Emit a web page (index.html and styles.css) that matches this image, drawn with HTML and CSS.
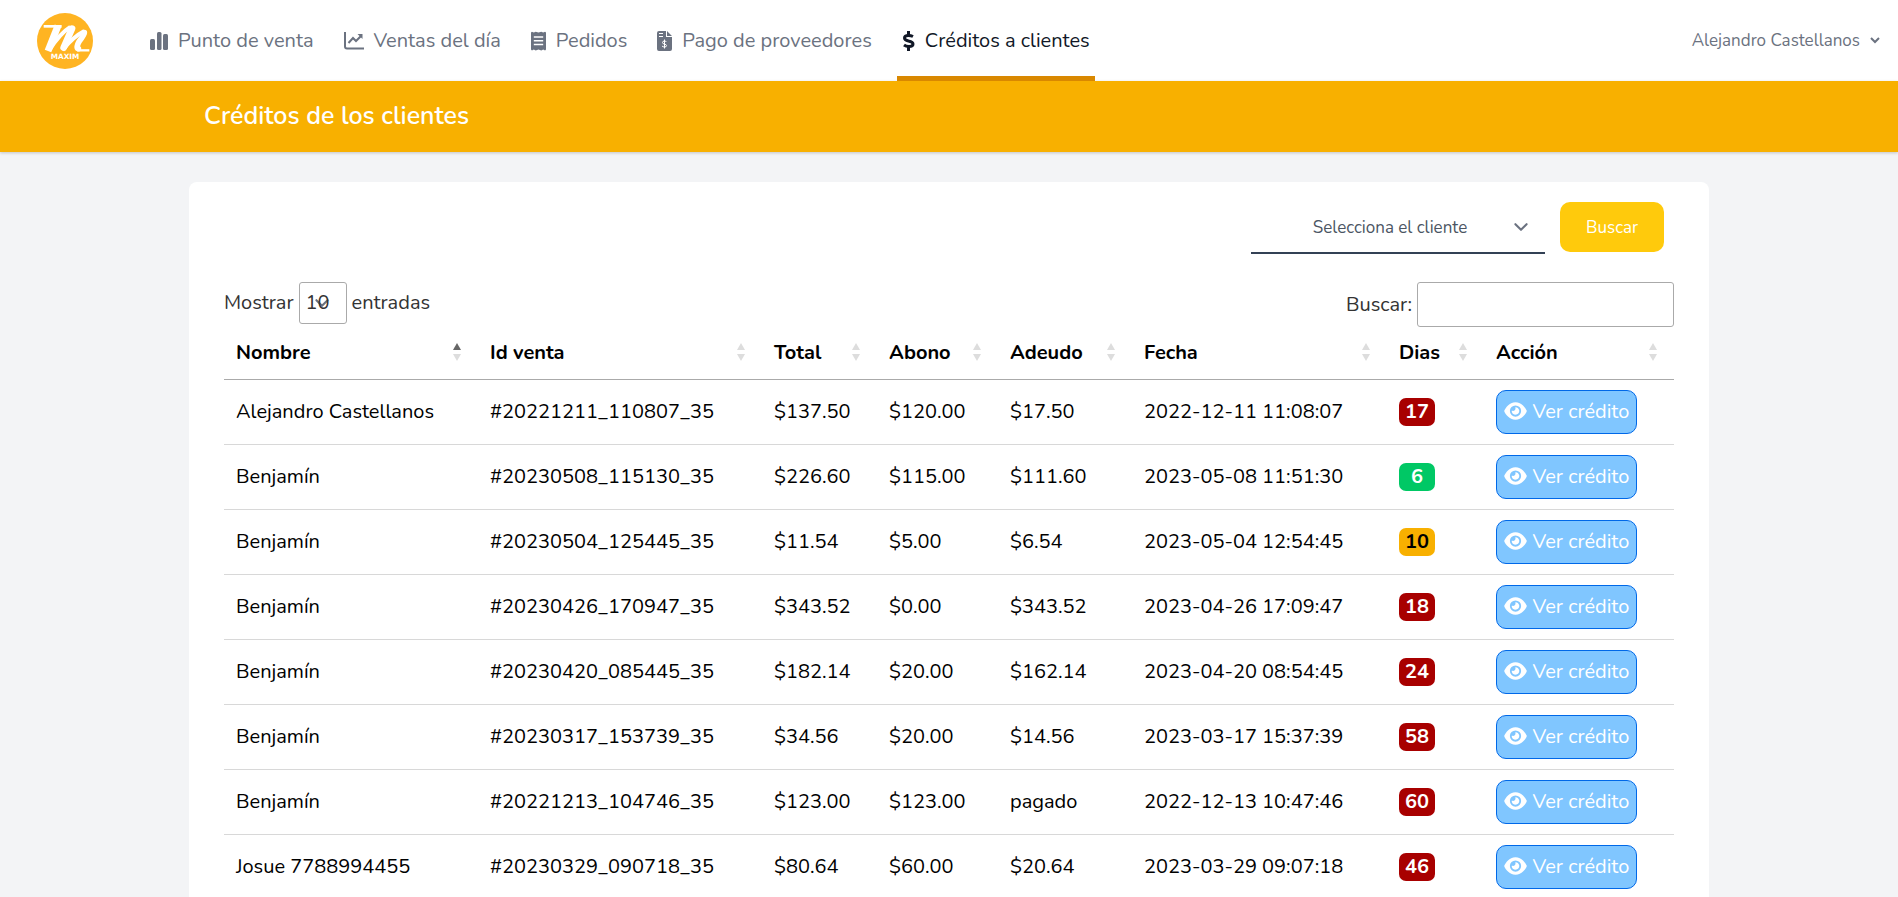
FILE: index.html
```html
<!DOCTYPE html>
<html lang="es">
<head>
    <meta charset="UTF-8">
    <meta name="viewport" content="width=device-width, initial-scale=1.0">
    <title>Créditos de los clientes</title>
    <link rel="stylesheet" href="styles.css">
</head>
<body>
    <svg class="sprite" aria-hidden="true">
        <symbol id="eye" viewBox="0 0 576 512">
            <path d="M288 32c-80.8 0-145.5 36.8-192.6 80.6C48.6 156 17.3 208 2.5 243.7c-3.3 7.9-3.3 16.7 0 24.6C17.3 304 48.6 356 95.4 399.4C142.5 443.2 207.2 480 288 480s145.5-36.8 192.6-80.6c46.8-43.5 78.1-95.4 93-131.1c3.3-7.9 3.3-16.7 0-24.6c-14.9-35.7-46.2-87.7-93-131.1C433.5 68.8 368.8 32 288 32zM144 256a144 144 0 1 1 288 0 144 144 0 1 1 -288 0zm144-64c0 35.3-28.7 64-64 64c-7.1 0-13.9-1.2-20.3-3.3c-5.5-1.8-11.9 1.6-11.7 7.4c.3 6.9 1.3 13.8 3.2 20.7c13.7 51.2 66.4 81.6 117.6 67.9s81.6-66.4 67.9-117.6c-11.1-41.5-47.8-69.4-88.6-71.1c-5.8-.2-9.2 6.1-7.4 11.7c2.1 6.4 3.3 13.2 3.3 20.3z"/>
        </symbol>
    </svg>

    <nav class="navbar">
        <a href="#" class="logo" aria-label="Maxim">
            <svg viewBox="0 0 168 168" width="56" height="56">
                <circle cx="84" cy="84" r="84" fill="#ffb422"/>
                <g fill="none" stroke="#fff" stroke-linejoin="round">
                    <path stroke-width="8" d="M20 40H74"/>
                    <path stroke-width="21" d="M63 38L33 114"/>
                    <path stroke-width="12" d="M38 110Q68 62 100 42"/>
                    <path stroke-width="20" stroke-linecap="round" d="M105 47L80 104"/>
                    <path stroke-width="12" d="M80 108Q108 72 142 54"/>
                    <path stroke-width="17" stroke-linecap="round" d="M142 59Q142 64 126 86Q116 104 124 107"/>
                    <path stroke-width="7" d="M120 112H157"/>
                </g>
                <text x="84" y="138" class="logo-text">MAXIM</text>
            </svg>
        </a>

        <div class="nav-links">
            <a href="#" class="nav-link">
                <svg class="icon" width="18" height="18" viewBox="0 0 18 18"><rect y="7" width="5" height="11" rx="1.5"/><rect x="7" width="4.5" height="18" rx="1.5"/><rect x="13" y="2" width="5" height="16" rx="1.5"/></svg>
                Punto de venta
            </a>
            <a href="#" class="nav-link">
                <svg class="icon line" width="20" height="18" viewBox="0 0 20 18"><path d="M1 0V14.500Q1 16.500 3 16.500H20"/><path d="M4.500 11L9 6L12 9L17 4"/><path class="solid" d="M13.500 2H18.500V7Z"/></svg>
                Ventas del día
            </a>
            <a href="#" class="nav-link">
                <svg class="icon" width="15" height="20" viewBox="0 0 16 20"><path fill-rule="evenodd" d="M1 0L3 1L5 0L8 1L11 0L13 1L15 0L16 1V19L15 20L13 19L11 20L8 19L5 20L3 19L1 20L0 19V1ZM3 5V6.500H13V5ZM3 9V10.500H13V9ZM3 13V14.500H13V13Z"/></svg>
                Pedidos
            </a>
            <a href="#" class="nav-link">
                <svg class="icon" width="15" height="20" viewBox="0 0 15 20"><path fill-rule="evenodd" d="M2 0H9V6H15V18Q15 20 13 20H2Q0 20 0 18V2Q0 0 2 0ZM2 2V3H6V2ZM2 5V6H6V5ZM10 0L15 5H10Z"/><path class="cut" d="M9.500 11Q9 10 7.500 10Q5.500 10 5.500 11.500Q5.500 13 7.500 13Q9.500 13.500 9.500 14.700Q9.500 16 7.500 16Q6 16 5 15M7.500 8.500V17.500"/></svg>
                Pago de proveedores
            </a>
            <a href="#" class="nav-link active" aria-current="page">
                <svg class="icon line" width="13" height="20" viewBox="0 0 13 20"><path d="M11 5.500Q9 4.500 6.500 4.500Q2.500 4.500 2.500 7Q2.500 9 6.500 10Q11 11 11 13Q11 15.500 7 15.500Q4 15.500 2 14"/><path d="M6.500 0V4M6.500 16V20"/></svg>
                Créditos a clientes
            </a>
        </div>

        <button type="button" class="user-menu">
            Alejandro Castellanos
            <svg class="icon line" width="10" height="7" viewBox="0 0 10 7"><path d="M1 1L5 5L9 1"/></svg>
        </button>
    </nav>

    <header class="page-header">
        <h1 class="container">Créditos de los clientes</h1>
    </header>

    <main class="container card">
        <form class="client-form">
            <select class="client-select" aria-label="Cliente">
                <option>Selecciona el cliente</option>
            </select>
            <button type="button" class="btn-search">Buscar</button>
        </form>

        <div class="table-tools">
            <div class="tool">
                <label for="length">Mostrar</label>
                <select id="length">
                    <option>10</option>
                    <option>25</option>
                    <option>50</option>
                </select>
                <span>entradas</span>
            </div>
            <div class="tool">
                <label for="filter">Buscar:</label>
                <input type="search" id="filter">
            </div>
        </div>

        <table class="credits">
            <colgroup>
                <col class="col-name">
                <col class="col-id">
                <col class="col-total">
                <col class="col-paid">
                <col class="col-debt">
                <col class="col-date">
                <col class="col-days">
                <col class="col-action">
            </colgroup>
            <thead>
                <tr>
                    <th aria-sort="ascending">Nombre</th>
                    <th>Id venta</th>
                    <th>Total</th>
                    <th>Abono</th>
                    <th>Adeudo</th>
                    <th>Fecha</th>
                    <th>Dias</th>
                    <th>Acción</th>
                </tr>
            </thead>
            <tbody>
                <tr>
                    <td>Alejandro Castellanos</td>
                    <td>#20221211_110807_35</td>
                    <td>$137.50</td>
                    <td>$120.00</td>
                    <td>$17.50</td>
                    <td>2022-12-11 11:08:07</td>
                    <td><span class="badge danger">17</span></td>
                    <td><button type="button" class="btn-view"><svg class="icon" width="23" height="20"><use href="#eye"/></svg>Ver crédito</button></td>
                </tr>
                <tr>
                    <td>Benjamín</td>
                    <td>#20230508_115130_35</td>
                    <td>$226.60</td>
                    <td>$115.00</td>
                    <td>$111.60</td>
                    <td>2023-05-08 11:51:30</td>
                    <td><span class="badge success">6</span></td>
                    <td><button type="button" class="btn-view"><svg class="icon" width="23" height="20"><use href="#eye"/></svg>Ver crédito</button></td>
                </tr>
                <tr>
                    <td>Benjamín</td>
                    <td>#20230504_125445_35</td>
                    <td>$11.54</td>
                    <td>$5.00</td>
                    <td>$6.54</td>
                    <td>2023-05-04 12:54:45</td>
                    <td><span class="badge warning">10</span></td>
                    <td><button type="button" class="btn-view"><svg class="icon" width="23" height="20"><use href="#eye"/></svg>Ver crédito</button></td>
                </tr>
                <tr>
                    <td>Benjamín</td>
                    <td>#20230426_170947_35</td>
                    <td>$343.52</td>
                    <td>$0.00</td>
                    <td>$343.52</td>
                    <td>2023-04-26 17:09:47</td>
                    <td><span class="badge danger">18</span></td>
                    <td><button type="button" class="btn-view"><svg class="icon" width="23" height="20"><use href="#eye"/></svg>Ver crédito</button></td>
                </tr>
                <tr>
                    <td>Benjamín</td>
                    <td>#20230420_085445_35</td>
                    <td>$182.14</td>
                    <td>$20.00</td>
                    <td>$162.14</td>
                    <td>2023-04-20 08:54:45</td>
                    <td><span class="badge danger">24</span></td>
                    <td><button type="button" class="btn-view"><svg class="icon" width="23" height="20"><use href="#eye"/></svg>Ver crédito</button></td>
                </tr>
                <tr>
                    <td>Benjamín</td>
                    <td>#20230317_153739_35</td>
                    <td>$34.56</td>
                    <td>$20.00</td>
                    <td>$14.56</td>
                    <td>2023-03-17 15:37:39</td>
                    <td><span class="badge danger">58</span></td>
                    <td><button type="button" class="btn-view"><svg class="icon" width="23" height="20"><use href="#eye"/></svg>Ver crédito</button></td>
                </tr>
                <tr>
                    <td>Benjamín</td>
                    <td>#20221213_104746_35</td>
                    <td>$123.00</td>
                    <td>$123.00</td>
                    <td>pagado</td>
                    <td>2022-12-13 10:47:46</td>
                    <td><span class="badge danger">60</span></td>
                    <td><button type="button" class="btn-view"><svg class="icon" width="23" height="20"><use href="#eye"/></svg>Ver crédito</button></td>
                </tr>
                <tr>
                    <td>Josue 7788994455</td>
                    <td>#20230329_090718_35</td>
                    <td>$80.64</td>
                    <td>$60.00</td>
                    <td>$20.64</td>
                    <td>2023-03-29 09:07:18</td>
                    <td><span class="badge danger">46</span></td>
                    <td><button type="button" class="btn-view"><svg class="icon" width="23" height="20"><use href="#eye"/></svg>Ver crédito</button></td>
                </tr>
            </tbody>
        </table>
    </main>
</body>
</html>
```
FILE: styles.css
```css
* {
    margin: 0;
    padding: 0;
    box-sizing: border-box;
}

body {
    background: #f3f4f6;
    color: #000;
    font-family: Nunito, Lato, sans-serif;
    font-size: 20px;
    line-height: 30px;
}

button, input, select {
    font: inherit;
    color: inherit;
}

button {
    cursor: pointer;
}

.sprite {
    display: none;
}

.icon {
    flex: none;
    fill: currentColor;
}

.icon.line {
    fill: none;
    stroke: currentColor;
    stroke-width: 2;
}

.icon .solid {
    fill: currentColor;
    stroke: none;
}

.icon .cut {
    fill: none;
    stroke: #fff;
}

.container {
    width: 100%;
    max-width: 1520px;
    margin: 0 auto;
}

/* Navbar */
.navbar {
    display: flex;
    height: 81px;
    padding: 0 18px 0 37px;
    background: #fff;
    color: #6b7280;
}

.logo {
    display: flex;
    align-items: center;
    margin-right: 52px;
}

.logo-text {
    fill: #fff;
    font-family: "DejaVu Sans", sans-serif;
    font-size: 22px;
    font-weight: 700;
    text-anchor: middle;
}

.nav-links {
    display: flex;
    gap: 20px;
}

.nav-link {
    display: flex;
    align-items: center;
    gap: 10px;
    padding: 5px 5px 0;
    border-bottom: 5px solid transparent;
    color: inherit;
    text-decoration: none;
}

.nav-link.active {
    border-color: #d98800;
    color: #111827;
}

.nav-link.active .icon {
    stroke-width: 3;
}

.user-menu {
    display: flex;
    align-items: center;
    gap: 10px;
    margin-left: auto;
    border: none;
    background: none;
    font-size: 17px;
}

.page-header {
    padding: 20px 0 21px;
    background: #f8b000;
    box-shadow: 0 1px 3px rgba(0, 0, 0, 0.2);
}

.page-header h1 {
    padding: 0 15px;
    color: #fff;
    font-size: 25px;
    font-weight: 600;
}

/* Card */
.card {
    margin-top: 30px;
    padding: 20px 35px;
    border-radius: 8px;
    background: #fff;
}

.client-form {
    display: flex;
    justify-content: flex-end;
    gap: 15px;
    padding-right: 10px;
    font-size: 17px;
}

select {
    appearance: none;
    background: url("data:image/svg+xml,%3Csvg xmlns='http://www.w3.org/2000/svg' fill='none' viewBox='0 0 20 20'%3E%3Cpath stroke='%236b7280' stroke-linecap='round' stroke-linejoin='round' stroke-width='1.5' d='M6 8l4 4 4-4'/%3E%3C/svg%3E") no-repeat right 10px center / 28px;
}

.client-select {
    width: 294px;
    height: 52px;
    padding: 2px 36px 0 20px;
    border: none;
    border-bottom: 2px solid #334155;
    color: #4b5563;
    text-align: center;
}

.btn-search {
    width: 104px;
    height: 50px;
    padding-top: 2px;
    border: none;
    border-radius: 10px;
    background: #ffca0c;
    color: #fff;
}

.table-tools {
    display: flex;
    justify-content: space-between;
    align-items: flex-start;
    margin-top: 28px;
    color: #333;
}

.tool {
    display: flex;
    align-items: center;
    gap: 5px;
}

#length,
#filter {
    border: 1px solid #aaa;
    border-radius: 3px;
}

#length {
    width: 48px;
    height: 42px;
    padding-left: 6px;
}

#filter {
    width: 257px;
    height: 45px;
    padding: 0 8px;
}

/* Table */
.credits {
    width: 100%;
    table-layout: fixed;
    border-collapse: collapse;
    text-align: left;
}

.col-name { width: 254px; }
.col-id { width: 284px; }
.col-total { width: 115px; }
.col-paid { width: 121px; }
.col-debt { width: 134px; }
.col-date { width: 255px; }
.col-days { width: 97px; }
.col-action { width: 190px; }

.credits th {
    position: relative;
    padding: 11px 12px;
    border-bottom: 1px solid #aaa;
    font-weight: 700;
}

/* Sort arrows */
.credits th::before,
.credits th::after {
    content: "";
    position: absolute;
    right: 17px;
    border: 4px solid transparent;
}

.credits th::before {
    top: 16px;
    border-width: 0 4px 7px;
    border-bottom-color: #ddd;
}

.credits th::after {
    top: 27px;
    border-width: 7px 4px 0;
    border-top-color: #ddd;
}

.credits th[aria-sort="ascending"]::before {
    border-bottom-color: #666;
}

.credits td {
    height: 65px;
    padding: 0 12px;
    border-bottom: 1px solid #d8d8d8;
}

.badge {
    display: block;
    width: 36px;
    border-radius: 7px;
    line-height: 28px;
    font-weight: 700;
    text-align: center;
}

.badge.danger {
    background: #a80000;
    color: #fff;
}

.badge.success {
    background: #00c865;
    color: #fff;
}

.badge.warning {
    background: #f8b000;
}

.btn-view {
    display: flex;
    align-items: center;
    justify-content: center;
    gap: 6px;
    width: 141px;
    height: 44px;
    border: 1px solid #0068e8;
    border-radius: 10px;
    background: #80c6ff;
    color: #fff;
}

.btn-view .icon {
    margin-bottom: 2px;
}
```
